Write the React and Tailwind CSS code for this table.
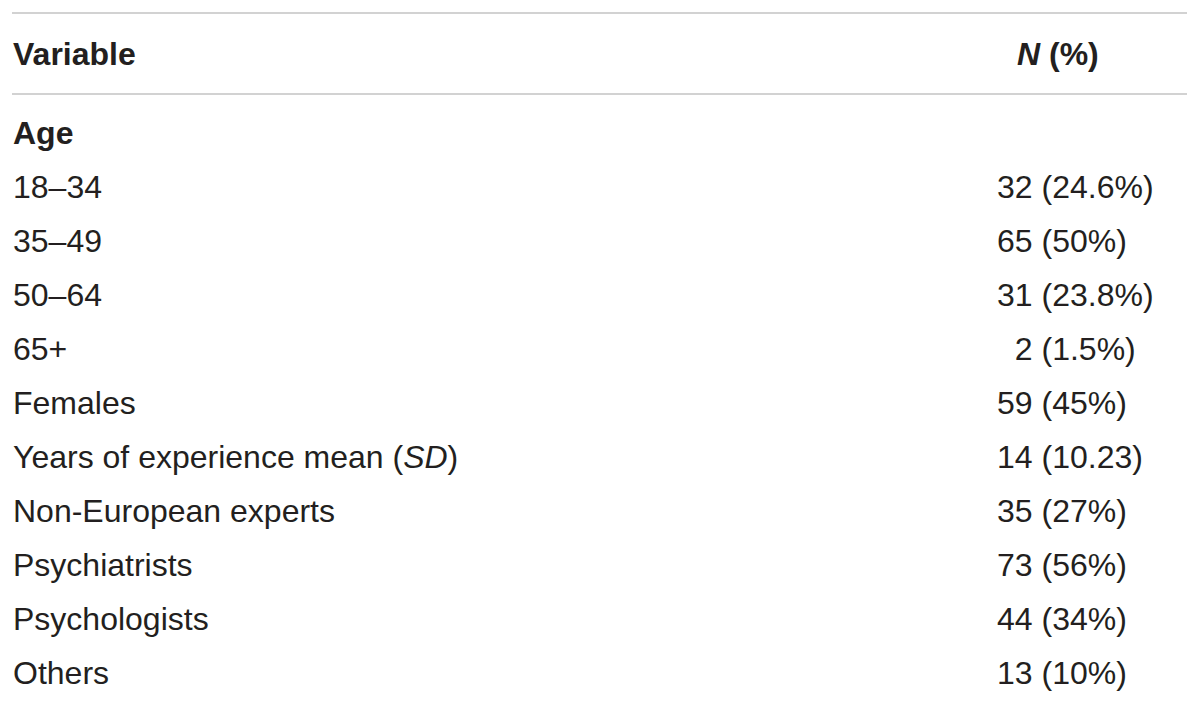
import React from 'react'

const rows = [
    ['18–34', '32 (24.6%)'],
    ['35–49', '65 (50%)'],
    ['50–64', '31 (23.8%)'],
    ['65+', '\u20072 (1.5%)'],
    ['Females', '59 (45%)'],
    [<>Years of experience mean (<i>SD</i>)</>, '14 (10.23)'],
    ['Non-European experts', '35 (27%)'],
    ['Psychiatrists', '73 (56%)'],
    ['Psychologists', '44 (34%)'],
    ['Others', '13 (10%)'],
]

const App = () => {
    return (
        <div className="w-[1200px] h-[704px] bg-white text-[#231f20] font-['Liberation_Sans',Arial,sans-serif] text-[32px] overflow-hidden">
            <div className="ml-[12px] mt-[12px] w-[1175px]">
                <div className="h-[2px] bg-[#d2d2d2]" />
                {/* header */}
                <div className="grid grid-cols-[985px_1fr] h-[79px] items-center font-bold">
                    <div className="pl-[1px]">Variable</div>
                    <div className="pl-[20px]"><i>N</i> (%)</div>
                </div>
                <div className="h-[2px] bg-[#d2d2d2]" />

                <div className="pt-[11px]">
                    <div className="h-[54px] flex items-center pl-[1px] font-bold">Age</div>
                    {rows.map((row, index) => {
                        return (
                            <div key={index} className="grid grid-cols-[985px_1fr] h-[54px] items-center whitespace-pre">
                                <div className="pl-[1px]">{row[0]}</div>
                                <div>{row[1]}</div>
                            </div>
                        )
                    })}
                </div>
            </div>
        </div>
    )
}

export default App
